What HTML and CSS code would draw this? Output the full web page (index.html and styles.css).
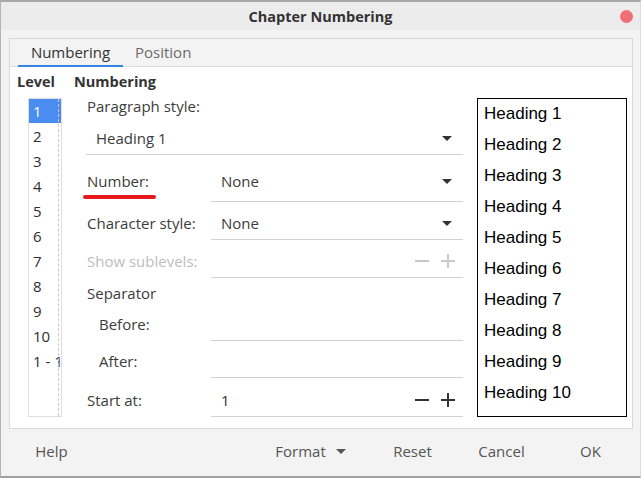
FILE: index.html
```html
<!DOCTYPE html>
<html>
<head>
<meta charset="utf-8">
<link rel="stylesheet" href="styles.css">
</head>
<body>
<div class="window">
  <div class="titlebar">
    <span></span>
    <span class="title">Chapter Numbering</span>
    <span class="close"></span>
  </div>
  <div class="content">
    <div class="frame">
      <div class="tabs">
        <div class="tab active">Numbering</div>
        <div class="tab">Position</div>
      </div>
      <div class="panel">
        <div class="level-col">
          <div class="heading">Level</div>
          <div class="level-list">
            <div class="level-item selected">1</div>
            <div class="level-item">2</div>
            <div class="level-item">3</div>
            <div class="level-item">4</div>
            <div class="level-item">5</div>
            <div class="level-item">6</div>
            <div class="level-item">7</div>
            <div class="level-item">8</div>
            <div class="level-item">9</div>
            <div class="level-item">10</div>
            <div class="level-item">1 - 10</div>
          </div>
        </div>
        <div class="num-col">
          <div class="heading">Numbering</div>
          <div class="form">
            <div class="label-line">Paragraph style:</div>
            <div class="combo wide">
              <span>Heading 1</span>
              <span class="arrow"></span>
            </div>
            <div class="row first">
              <div class="label marked">Number:</div>
              <div class="field combo tall"><span>None</span><span class="arrow"></span></div>
            </div>
            <div class="row">
              <div class="label">Character style:</div>
              <div class="field combo"><span>None</span><span class="arrow"></span></div>
            </div>
            <div class="row">
              <div class="label disabled">Show sublevels:</div>
              <div class="field spin disabled">
                <span></span>
                <span class="spin-btns">
                  <svg width="16" height="16" viewBox="0 0 16 16"><path d="M1 8H15" stroke="currentColor" stroke-width="2"/></svg>
                  <svg width="16" height="16" viewBox="0 0 16 16"><path d="M1 8H15M8 1V15" stroke="currentColor" stroke-width="2"/></svg>
                </span>
              </div>
            </div>
            <div class="sep-label">Separator</div>
            <div class="row sub">
              <div class="label indent">Before:</div>
              <div class="field"></div>
            </div>
            <div class="row after">
              <div class="label indent">After:</div>
              <div class="field"></div>
            </div>
            <div class="row start">
              <div class="label">Start at:</div>
              <div class="field spin">
                <span>1</span>
                <span class="spin-btns">
                  <svg width="16" height="16" viewBox="0 0 16 16"><path d="M1 8H15" stroke="currentColor" stroke-width="2"/></svg>
                  <svg width="16" height="16" viewBox="0 0 16 16"><path d="M1 8H15M8 1V15" stroke="currentColor" stroke-width="2"/></svg>
                </span>
              </div>
            </div>
          </div>
        </div>
        <div class="preview">
          <div class="pv-line">Heading 1</div>
          <div class="pv-line">Heading 2</div>
          <div class="pv-line">Heading 3</div>
          <div class="pv-line">Heading 4</div>
          <div class="pv-line">Heading 5</div>
          <div class="pv-line">Heading 6</div>
          <div class="pv-line">Heading 7</div>
          <div class="pv-line">Heading 8</div>
          <div class="pv-line">Heading 9</div>
          <div class="pv-line">Heading 10</div>
        </div>
      </div>
    </div>
  </div>
  <div class="buttons">
    <div class="btn help">Help</div>
    <div class="spacer"></div>
    <div class="btn format">Format <span class="arrow small"></span></div>
    <div class="btn">Reset</div>
    <div class="btn">Cancel</div>
    <div class="btn">OK</div>
  </div>
</div>
</body>
</html>
```
FILE: styles.css
```css
* { box-sizing: border-box; }
html, body {
  margin: 0;
  padding: 0;
  width: 641px;
  height: 478px;
  overflow: hidden;
  background: #f2f2f2;
}
body {
  font-family: "Open Sans", "Noto Sans", sans-serif;
  font-size: 15px;
  color: #3c3c3c;
}
.window {
  width: 641px;
  height: 478px;
  border-top: 2px solid #a8a8a8;
  border-left: 1px solid #b4b4b4;
  border-right: 1px solid #dcdcdc;
  border-bottom: 2px solid #a0a0a0;
  background: #f3f3f3;
  display: flex;
  flex-direction: column;
}
.titlebar {
  height: 28px;
  flex: none;
  background: #ececec;
  display: grid;
  grid-template-columns: 1fr auto 1fr;
  align-items: center;
}
.title {
  font-weight: bold;
  font-size: 14.5px;
  color: #333;
}
.close {
  justify-self: end;
  margin-right: 7px;
  width: 13px;
  height: 13px;
  border-radius: 50%;
  background: #f26e76;
}
.content {
  padding: 8px 7px 0 8px;
  flex: none;
}
.frame {
  border: 1px solid #d9d9d9;
  height: 391px;
  display: flex;
  flex-direction: column;
  background: #fff;
}
.tabs {
  height: 28px;
  display: flex;
  background: #f3f3f3;
  border-bottom: 1px solid #dcdcdc;
  padding-left: 8px;
}
.tab {
  padding: 0 12px;
  line-height: 26px;
  color: #6b6b6b;
  border-bottom: 2px solid transparent;
  font-size: 15px;
  margin-bottom: -1px;
}
.tab.active {
  color: #333;
  border-bottom-color: #3584e4;
  width: 105px;
  padding: 0;
  text-align: center;
}
.panel {
  flex: 1;
  display: flex;
  padding-left: 7px;
  background: #fff;
}
.heading {
  font-weight: bold;
  height: 30px;
  line-height: 30px;
  color: #333;
  font-size: 14.5px;
}
.level-col {
  width: 45px;
  flex: none;
}
.level-list {
  margin-left: 11px;
  width: 34px;
  height: 319px;
  margin-top: 1px;
  border: 1px solid #dedede;
  position: relative;
  overflow: hidden;
}
.level-list::after {
  content: "";
  position: absolute;
  top: 0;
  bottom: 0;
  left: 29px;
  border-left: 1px dashed #c8c8c8;
}
.level-item {
  height: 25px;
  line-height: 24px;
  padding-left: 4px;
  white-space: nowrap;
  color: #2e2e2e;
}
.level-item.selected {
  background: #4a8cf0;
  color: #fff;
  height: 24px;
  margin-bottom: 1px;
}
.num-col {
  width: 389px;
  margin-left: 12px;
  flex: none;
}
.form {
  padding-left: 12px;
}
.label-line {
  height: 18px;
  line-height: 18px;
  padding-left: 1px;
}
.combo {
  display: flex;
  align-items: center;
  justify-content: space-between;
  border-bottom: 1px solid #d2d2d2;
  height: 33px;
  padding: 0 11px 0 10px;
}
.combo.wide {
  margin-top: 7px;
  width: 377px;
}
.arrow {
  width: 0;
  height: 0;
  border-left: 5px solid transparent;
  border-right: 5px solid transparent;
  border-top: 5px solid #333;
}
.row {
  display: flex;
  align-items: flex-start;
  margin-top: 5px;
}
.row.first { margin-top: 10px; }
.row.after { margin-top: 4px; }
.row.start { margin-top: 6px; }
.label {
  width: 125px;
  flex: none;
  height: 32px;
  line-height: 32px;
  padding-left: 1px;
  white-space: nowrap;
}
.label.indent { padding-left: 13px; }
.label.disabled, .field.disabled { color: #bdbdbd; }
.label.marked { position: relative; }
.label.marked::after {
  content: "";
  position: absolute;
  left: -3px;
  bottom: -2px;
  width: 73px;
  height: 4px;
  border-radius: 2px;
  background: #e8191c;
}
.field {
  width: 252px;
  height: 33px;
  border-bottom: 1px solid #d2d2d2;
  display: flex;
  align-items: center;
  justify-content: space-between;
  padding: 0 11px 0 10px;
}
.field.combo.tall {
  height: 37px;
  padding-bottom: 4px;
}
.field.spin { padding-right: 7px; color: #333; }
.field.spin.disabled { color: #c8c8c8; }
.spin-btns {
  display: flex;
  gap: 10px;
}
.spin-btns svg { display: block; }
.sep-label {
  margin-top: 5px;
  height: 20px;
  line-height: 20px;
  padding-left: 1px;
}
.preview {
  margin-left: 14px;
  margin-top: 31px;
  width: 150px;
  height: 319px;
  border: 1px solid #000;
  background: #fff;
  padding: 0 0 0 6px;
  font-family: "Liberation Sans", Arial, sans-serif;
  font-size: 17px;
  color: #000;
}
.pv-line {
  height: 31px;
  line-height: 29px;
}
.buttons {
  flex: 1;
  display: flex;
  align-items: center;
  padding: 0 5px 3px 6px;
  color: #555;
  font-size: 15px;
}
.spacer { flex: 1; }
.btn {
  width: 89px;
  text-align: center;
  white-space: nowrap;
}
.btn.format { width: 115px; display: flex; align-items: center; justify-content: center; gap: 10px; }
.arrow.small { border-top-color: #555; }
```
